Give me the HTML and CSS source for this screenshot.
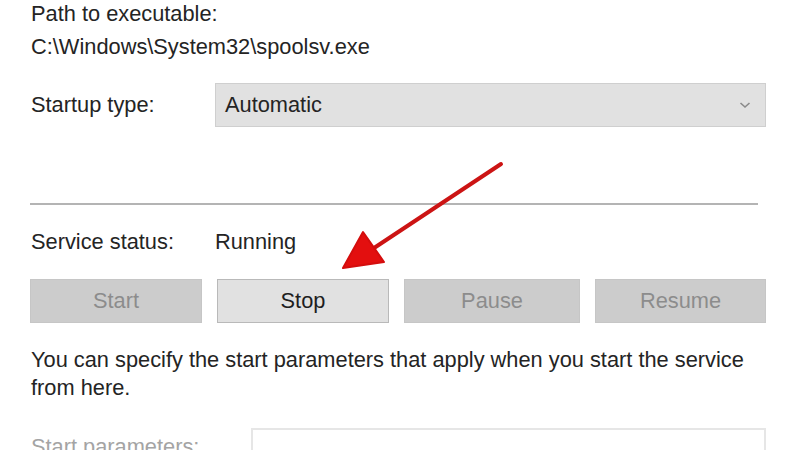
FILE: index.html
```html
<!DOCTYPE html>
<html lang="en">
  <head>
    <meta charset="UTF-8" />
    <title>Print Spooler Properties</title>
    <link rel="stylesheet" href="styles.css">
  </head>
  <body>
    <div class="panel">
      <div class="path">
        <div class="line">Path to executable:</div>
        <div class="line">C:\Windows\System32\spoolsv.exe</div>
      </div>

      <div class="row startup">
        <span class="label">Startup type:</span>
        <div class="select">
          <span>Automatic</span>
          <svg class="chevron" width="12" height="8" viewBox="0 0 12 8">
            <path d="M1.5 2 L6 6 L10.5 2" fill="none" stroke="#8a8a8a" stroke-width="1.6" />
          </svg>
        </div>
      </div>

      <hr class="sep" />

      <div class="row status">
        <span class="label">Service status:</span>
        <span>Running</span>
      </div>

      <div class="buttons">
        <button class="btn" disabled>Start</button>
        <button class="btn active">Stop</button>
        <button class="btn" disabled>Pause</button>
        <button class="btn" disabled>Resume</button>
      </div>

      <p class="note">
        You can specify the start parameters that apply when you start the service<br />
        from here.
      </p>

      <div class="row params">
        <span class="label muted">Start parameters:</span>
        <div class="input"></div>
      </div>
    </div>

    <svg class="arrow" width="800" height="450" viewBox="0 0 800 450">
      <line x1="501" y1="164" x2="368" y2="252" stroke="#cc1414" stroke-width="4" stroke-linecap="round" />
      <polygon points="343,268 363,232 384,262" fill="#e30f0f" stroke="#d40d0d" stroke-width="2" stroke-linejoin="round" />
    </svg>
  </body>
</html>
```

FILE: styles.css
```css
body {
  background: #fff;
  color: #242424;
  font-family: "Liberation Sans", Arial, sans-serif;
  font-size: 21.8px;
  margin: 0;
  overflow: hidden;
}

.panel {
  padding: 0 34px 0 30px;
  width: 736px;
}

.path {
  padding-left: 1px;
}

.path .line {
  height: 33px;
  line-height: 28px;
}

.row {
  display: flex;
  align-items: center;
}

.label {
  padding-left: 1px;
  width: 184px;
}

.startup {
  margin-top: 17px;
}

.select {
  align-items: center;
  background: #e1e1e1;
  border: 1px solid #cfcfcf;
  box-sizing: border-box;
  display: flex;
  flex: 1;
  height: 44px;
  justify-content: space-between;
  padding: 0 14px 0 9px;
}

.sep {
  border: 0;
  border-top: 2px solid #b4b4b4;
  margin: 76px 8px 0 0;
}

.status {
  height: 30px;
  margin-top: 22px;
}

.buttons {
  display: flex;
  gap: 15px;
  margin-top: 22px;
}

.btn {
  background: #cccccc;
  border: 1px solid #c6c6c6;
  color: #8c8c8c;
  font-family: inherit;
  font-size: 21.8px;
  height: 44px;
  padding: 0;
  width: 172px;
}

.btn:nth-child(3) {
  width: 176px;
}

.btn:nth-child(4) {
  width: 171px;
}

.btn.active {
  background: #e1e1e1;
  border-color: #b9b9b9;
  color: #1e1e1e;
}

.note {
  line-height: 28px;
  margin: 23px 0 0 1px;
}

.params {
  align-items: flex-start;
  margin-top: 26px;
}

.params .label {
  width: 220px;
  padding-top: 6px;
}

.muted {
  color: #a4a4a4;
}

.input {
  border: 2px solid #e6e6e6;
  box-sizing: border-box;
  flex: 1;
  height: 40px;
}

.arrow {
  left: 0;
  pointer-events: none;
  position: absolute;
  top: 0;
}
```
